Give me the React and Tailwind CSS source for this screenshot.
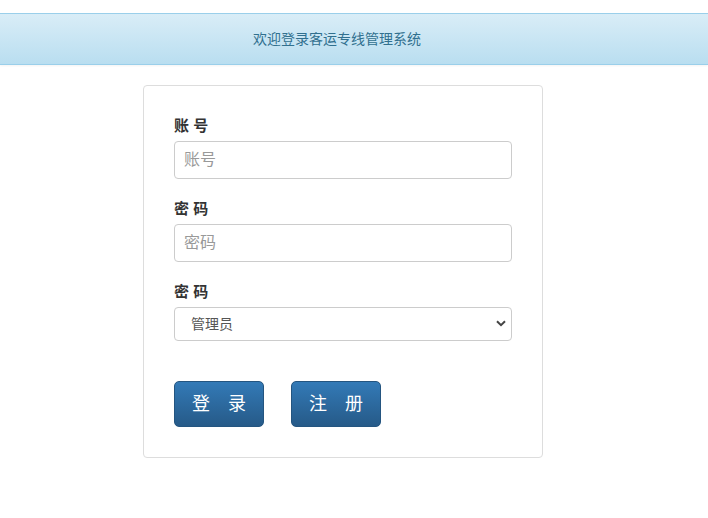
export default function App() {
  return (
    <div className="min-h-screen bg-white text-[#333] font-['Liberation_Sans','Noto_Sans_CJK_SC',sans-serif] text-[14px]">
      <div className="pt-[13px]">
        <div className="h-[52px] border-y border-[#9acfea] bg-gradient-to-b from-[#d9edf7] to-[#b9def0] shadow-[0_1px_2px_rgba(0,0,0,0.05)] flex items-center justify-center pr-[34px]">
          <span className="text-[#31708f] text-[14px] leading-5">欢迎登录客运专线管理系统</span>
        </div>
      </div>

      <div className="ml-[143px] mt-[20px] w-[400px] border border-[#ddd] rounded-[4px] px-[30px] pt-[30px] pb-[30px]">
        <div className="mb-[20px]">
          <label className="block font-bold text-[15px] leading-5 mb-[5px]">账 号</label>
          <input
            className="block w-full h-[38px] border border-[#ccc] rounded-[4px] px-[9px] text-[16px] text-[#555] placeholder:text-[#999] outline-none"
            placeholder="账号"
          />
        </div>
        <div className="mb-[20px]">
          <label className="block font-bold text-[15px] leading-5 mb-[5px]">密 码</label>
          <input
            type="password"
            className="block w-full h-[38px] border border-[#ccc] rounded-[4px] px-[9px] text-[16px] text-[#555] placeholder:text-[#999] outline-none"
            placeholder="密码"
          />
        </div>
        <div>
          <label className="block font-bold text-[15px] leading-5 mb-[5px]">密 码</label>
          <div className="relative">
            <select className="block w-full h-[34px] appearance-none border border-[#ccc] rounded-[4px] pl-[16px] pr-8 text-[14px] text-[#555] bg-white outline-none">
              <option>管理员</option>
              <option>用户</option>
            </select>
            <svg className="absolute right-[6px] top-[13px] pointer-events-none" width="10" height="7" viewBox="0 0 10 7">
              <path d="M1 1.2 L5 5.2 L9 1.2" fill="none" stroke="#444" strokeWidth="2" />
            </svg>
          </div>
        </div>

        <div className="mt-[40px] flex gap-[27px]">
          <button className="w-[90px] h-[46px] rounded-[5px] border border-[#245580] bg-gradient-to-b from-[#337ab7] to-[#265a88] text-white text-[18px]">
            登　录
          </button>
          <button className="w-[90px] h-[46px] rounded-[5px] border border-[#245580] bg-gradient-to-b from-[#337ab7] to-[#265a88] text-white text-[18px]">
            注　册
          </button>
        </div>
      </div>
    </div>
  );
}
